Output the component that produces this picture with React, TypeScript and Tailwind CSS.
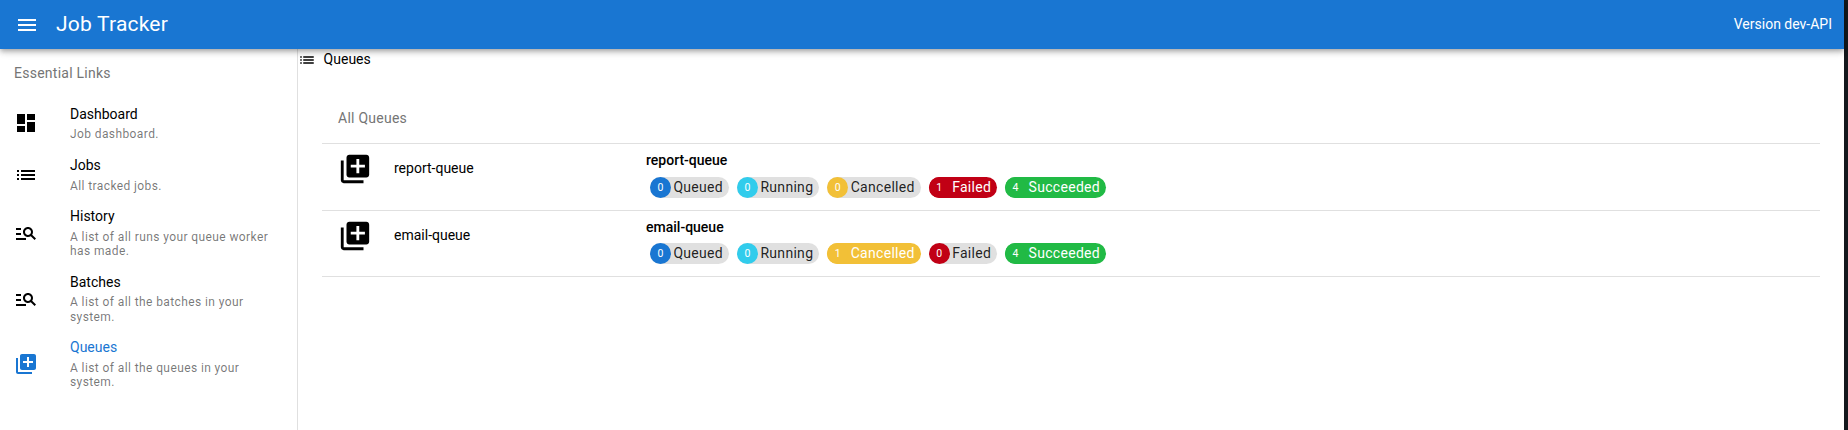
import React from "react";
import type { IconType } from "react-icons";
import { MdDashboard, MdList, MdManageSearch, MdMenu, MdQueue } from "react-icons/md";

type Link = { title: string; caption: string; icon: IconType; active?: boolean };

const links: Link[] = [
  { title: "Dashboard", caption: "Job dashboard.", icon: MdDashboard },
  { title: "Jobs", caption: "All tracked jobs.", icon: MdList },
  { title: "History", caption: "A list of all runs your queue worker has made.", icon: MdManageSearch },
  { title: "Batches", caption: "A list of all the batches in your system.", icon: MdManageSearch },
  { title: "Queues", caption: "A list of all the queues in your system.", icon: MdQueue, active: true },
];

type Status = { label: string; color: string };

const statuses: Status[] = [
  { label: "Queued", color: "bg-[#1976d2]" },
  { label: "Running", color: "bg-[#31ccec]" },
  { label: "Cancelled", color: "bg-[#f2c037]" },
  { label: "Failed", color: "bg-[#c10015]" },
  { label: "Succeeded", color: "bg-[#21ba45]" },
];

const queues = [
  { name: "report-queue", counts: [0, 0, 0, 1, 4], row: "h-[67px]", chips: "mt-2" },
  { name: "email-queue", counts: [0, 0, 1, 0, 4], row: "h-[66px]", chips: "mt-[7px]" },
];

function Chip({ status, count }: { status: Status; count: number }) {
  const filled = count > 0;
  return (
    <div
      className={`mx-1 flex h-[21px] items-center rounded-full pr-[6px] text-[14px] leading-[21px] tracking-[0.3px] ${
        filled ? `${status.color} text-white` : "bg-[#e0e0e0] text-black/87"
      }`}
    >
      <span
        className={`mr-[2.4px] flex size-[21px] items-center justify-center rounded-full text-[10.5px] text-white ${status.color}`}
      >
        {count}
      </span>
      {status.label}
    </div>
  );
}

function Sidebar() {
  return (
    <nav className="w-[298px] shrink-0 border-r border-black/12">
      <div className="px-[14px] py-4 text-[14px] leading-[16.8px] tracking-[0.25px] text-[#757575]">Essential Links</div>
      {links.map(({ title, caption, icon: Icon, active }) => (
        <a key={title} className={`flex px-[14px] py-2 ${active ? "text-[#1976d2]" : "text-black"}`}>
          <div className="flex w-14 shrink-0 items-center">
            <Icon size={24} />
          </div>
          <div className="flex-1">
            <div className="text-[14px] leading-[16.8px]">{title}</div>
            <div className="mt-[4.75px] -mb-[0.75px] text-[12px] leading-[14.4px] tracking-[0.4px] text-black/54">
              {caption}
            </div>
          </div>
        </a>
      ))}
    </nav>
  );
}

export default function App() {
  return (
    <div className="flex h-[430px] overflow-hidden bg-[#14181d] font-[Roboto,sans-serif]">
      <div className="flex w-[1844px] flex-col bg-white">
        <header className="relative z-10 flex h-[49px] shrink-0 items-center bg-[#1976d2] pr-3 pl-[15px] text-white shadow-[0_2px_4px_-1px_rgba(0,0,0,0.2),0_4px_5px_rgba(0,0,0,0.14),0_1px_10px_rgba(0,0,0,0.12)]">
          <MdMenu size={24} />
          <h1 className="ml-[17px] flex-1 text-[21px] tracking-[0.21px]">Job Tracker</h1>
          <div className="text-[14px]">Version dev-API</div>
        </header>
        <div className="flex flex-1">
          <Sidebar />
          <main className="flex-1 text-[14px] text-black">
            <div className="flex h-[21px] items-center">
              <MdList size={18} className="mt-px mr-2 -ml-[0.4px]" />
              Queues
            </div>
            <section className="mt-[23px] mr-6 ml-6">
              <div className="flex h-[51px] items-center border-b border-black/12 px-4 tracking-[0.25px] text-[#757575]">
                <span>All Queues</span>
              </div>
              {queues.map((queue) => (
                <div key={queue.name} className={`flex border-b border-black/12 px-4 pt-2 ${queue.row}`}>
                  <MdQueue size={34} />
                  <div className="ml-[22px] w-[252px] pt-[6px]">{queue.name}</div>
                  <div>
                    <div className="text-[14px] leading-[17px] font-medium">{queue.name}</div>
                    <div className={`flex ${queue.chips}`}>
                      {statuses.map((status, i) => (
                        <Chip key={status.label} status={status} count={queue.counts[i]} />
                      ))}
                    </div>
                  </div>
                </div>
              ))}
            </section>
          </main>
        </div>
      </div>
    </div>
  );
}
